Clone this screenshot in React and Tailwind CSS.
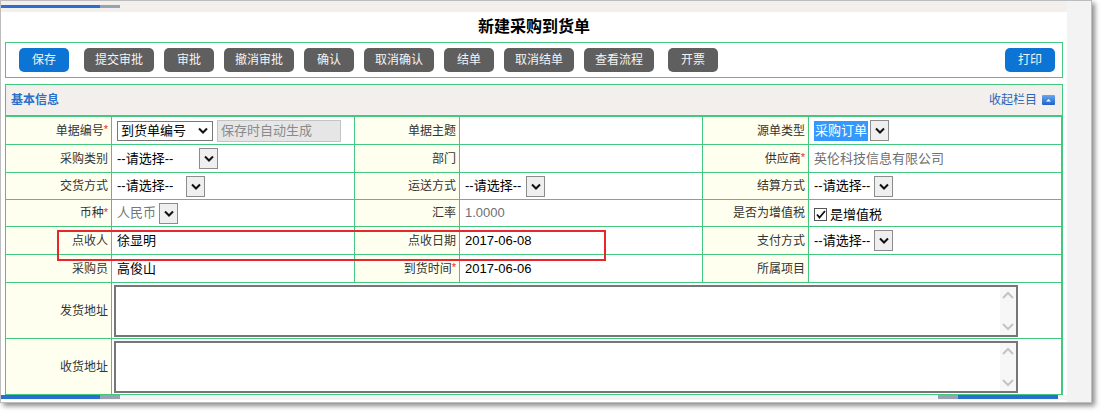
import React from 'react';

const FONT = "font-['Liberation_Sans','Noto_Sans_CJK_SC',sans-serif]";

const Chevron = ({ color = '#111' }) => (
  <svg width="10" height="7" viewBox="0 0 10 7">
    <path d="M1 1.5l4 4 4-4" stroke={color} strokeWidth="2" fill="none" />
  </svg>
);

const DropBox = () => (
  <span className="w-[19px] h-[21px] border border-[#8c8c8c] bg-[#efefef] flex items-center justify-center shrink-0">
    <Chevron />
  </span>
);

const Star = () => <span className="text-[#e8262b] text-[11px] leading-none self-start mt-[7px]">*</span>;

const Label = ({ children, req }) => (
  <div className="bg-[#fffff0] flex items-center justify-end pr-[3px] text-[12px] text-[#333]">
    <span>{children}</span>
    {req && <Star />}
  </div>
);

const Value = ({ children, gray, className = '' }) => (
  <div className={`bg-white flex items-center pl-[5px] text-[13px] ${gray ? 'text-[#6f6f6f]' : 'text-black'} ${className}`}>
    {children}
  </div>
);

const Pick = ({ w, text = '--请选择--', gray }) => (
  <span className={`flex items-center justify-between ${w}`}>
    <span className={gray ? 'text-[#777]' : ''}>{text}</span>
    <DropBox />
  </span>
);

const ScrollArrows = () => (
  <div className="w-[16px] bg-[#f7f7f7] flex flex-col justify-between items-center py-[4px]">
    <svg width="12" height="8" viewBox="0 0 12 8"><path d="M1 7l5-5 5 5" stroke="#c4c4c4" strokeWidth="2" fill="none" /></svg>
    <svg width="12" height="8" viewBox="0 0 12 8"><path d="M1 1l5 5 5-5" stroke="#c4c4c4" strokeWidth="2" fill="none" /></svg>
  </div>
);

const AddressBox = () => (
  <div className="bg-white col-span-5 pl-[2px] pt-[2px]">
    <div className="w-[904px] h-[52px] border-2 border-[#767676] bg-white flex justify-end">
      <ScrollArrows />
    </div>
  </div>
);

const buttons = [
  { t: '保存', w: 'w-[50px]', ml: 'ml-[13px]', blue: true },
  { t: '提交审批', w: 'w-[70px]', ml: 'ml-[15px]' },
  { t: '审批', w: 'w-[50px]', ml: 'ml-[10px]' },
  { t: '撤消审批', w: 'w-[70px]', ml: 'ml-[10px]' },
  { t: '确认', w: 'w-[50px]', ml: 'ml-[10px]' },
  { t: '取消确认', w: 'w-[70px]', ml: 'ml-[10px]' },
  { t: '结单', w: 'w-[50px]', ml: 'ml-[10px]' },
  { t: '取消结单', w: 'w-[70px]', ml: 'ml-[10px]' },
  { t: '查看流程', w: 'w-[70px]', ml: 'ml-[10px]' },
  { t: '开票', w: 'w-[50px]', ml: 'ml-[14px]' },
];

export default function App() {
  return (
    <div className={`relative w-[1101px] h-[412px] bg-white ${FONT}`}>
      <div className="w-[1092px] h-[403px] border border-[#bdbdbd] flex shadow-[3px_3px_5px_rgba(0,0,0,0.45)]">
        <div className="w-[1066px] flex flex-col bg-white">
          {/* top scroll strip */}
          <div className="h-[11px] bg-[#f2efec] flex pt-[4px]">
            <span className="w-[99px] h-[3px] bg-[#2b6dd0]" />
            <span className="w-[20px] h-[3px] bg-[#9aa2b2]" />
          </div>

          <div className="h-[30px] flex items-center justify-center">
            <h1 className="text-[16px] font-bold text-black">新建采购到货单</h1>
          </div>

          {/* toolbar */}
          <div className="mx-[4px] h-[36px] border border-[#43c97f] flex items-center">
            {buttons.map((b) => (
              <button
                key={b.t}
                className={`${b.w} ${b.ml} h-[24px] rounded-[5px] text-[12px] text-[#f4f4f4] ${b.blue ? 'bg-[#0c74d5]' : 'bg-[#5f5f5f]'}`}
              >
                {b.t}
              </button>
            ))}
            <button className="ml-auto mr-[7px] w-[50px] h-[24px] rounded-[5px] text-[12px] text-[#f4f4f4] bg-[#0c74d5]">打印</button>
          </div>

          {/* basic info section */}
          <div className="mx-[4px] mt-[6px] border border-[#43c97f]">
            <div className="h-[32px] bg-[#f2efec] border-b-2 border-[#43c97f] flex items-center px-[5px]">
              <span className="text-[12px] font-bold text-[#2a6fc9]">基本信息</span>
              <span className="ml-auto text-[12px] text-[#2d64b8]">收起栏目</span>
              <svg className="ml-[5px] mr-[2px]" width="13" height="10" viewBox="0 0 13 10">
                <defs>
                  <linearGradient id="ig" x1="0" y1="0" x2="0" y2="1">
                    <stop offset="0" stopColor="#6aa6ee" />
                    <stop offset="1" stopColor="#1f62c6" />
                  </linearGradient>
                </defs>
                <rect x="0" y="0" width="13" height="10" rx="1" fill="url(#ig)" />
                <path d="M4 6.5h5L6.5 4z" fill="#fff" />
              </svg>
            </div>

            <div className="grid grid-cols-[105px_242px_104px_242px_105px_252px] grid-rows-[27px_27px_26px_26px_27px_27px_55px_55px] gap-px bg-[#43c97f]">
              <Label req>单据编号</Label>
              <Value className="pl-[4px] gap-[4px]">
                <span className="w-[96px] h-[20px] border border-[#777] flex items-center justify-between pl-[3px] pr-[4px]">
                  <span>到货单编号</span>
                  <Chevron />
                </span>
                <span className="w-[124px] h-[22px] border border-[#c4c4c4] bg-[#e6e6e6] text-[#8a8a8a] flex items-center pl-[3px]">
                  保存时自动生成
                </span>
              </Value>
              <Label>单据主题</Label>
              <Value />
              <Label>源单类型</Label>
              <Value className="gap-[2px]">
                <span className="bg-[#3399ff] text-white h-[20px] w-[54px] flex items-center pl-[1px]">采购订单</span>
                <DropBox />
              </Value>

              <Label>采购类别</Label>
              <Value><Pick w="w-[101px]" /></Value>
              <Label>部门</Label>
              <Value />
              <Label req>供应商</Label>
              <Value gray>英伦科技信息有限公司</Value>

              <Label>交货方式</Label>
              <Value><Pick w="w-[88px]" /></Value>
              <Label>运送方式</Label>
              <Value><Pick w="w-[80px]" /></Value>
              <Label>结算方式</Label>
              <Value><Pick w="w-[79px]" /></Value>

              <Label req>币种</Label>
              <Value><Pick w="w-[61px]" text="人民币" gray /></Value>
              <Label>汇率</Label>
              <Value gray>1.0000</Value>
              <Label>是否为增值税</Label>
              <Value className="gap-[3px]">
                <span className="w-[13px] h-[13px] border border-[#555] bg-white flex items-center justify-center mt-[2px]">
                  <svg width="10" height="9" viewBox="0 0 10 9"><path d="M1 4.5l2.5 3L9 1" stroke="#111" strokeWidth="1.8" fill="none" /></svg>
                </span>
                <span className="mt-[3px]">是增值税</span>
              </Value>

              <Label>点收人</Label>
              <Value>徐显明</Value>
              <Label>点收日期</Label>
              <Value>2017-06-08</Value>
              <Label>支付方式</Label>
              <Value><Pick w="w-[79px]" /></Value>

              <Label>采购员</Label>
              <Value>高俊山</Value>
              <Label req>到货时间</Label>
              <Value>2017-06-06</Value>
              <Label>所属项目</Label>
              <Value />

              <Label>发货地址</Label>
              <AddressBox />
              <Label>收货地址</Label>
              <AddressBox />
            </div>
          </div>

          {/* bottom scroll strip */}
          <div className="h-[5px] bg-[#f4f4f4] flex">
            <span className="w-[99px] h-[4px] bg-[#2b6dd0]" />
            <span className="w-[20px] h-[4px] bg-[#9aa2b2]" />
            <span className="ml-auto w-[20px] h-[4px] bg-[#9aa2b2]" />
            <span className="w-[100px] h-[4px] bg-[#2b6dd0] mr-[9px]" />
          </div>
        </div>
        <div className="flex-1 bg-[#f3f3f3]" />
      </div>

      {/* red highlight annotation */}
      <div className="absolute left-[57px] top-[230px] w-[549px] h-[31px] border-2 border-[#e8262b]" />
    </div>
  );
}
